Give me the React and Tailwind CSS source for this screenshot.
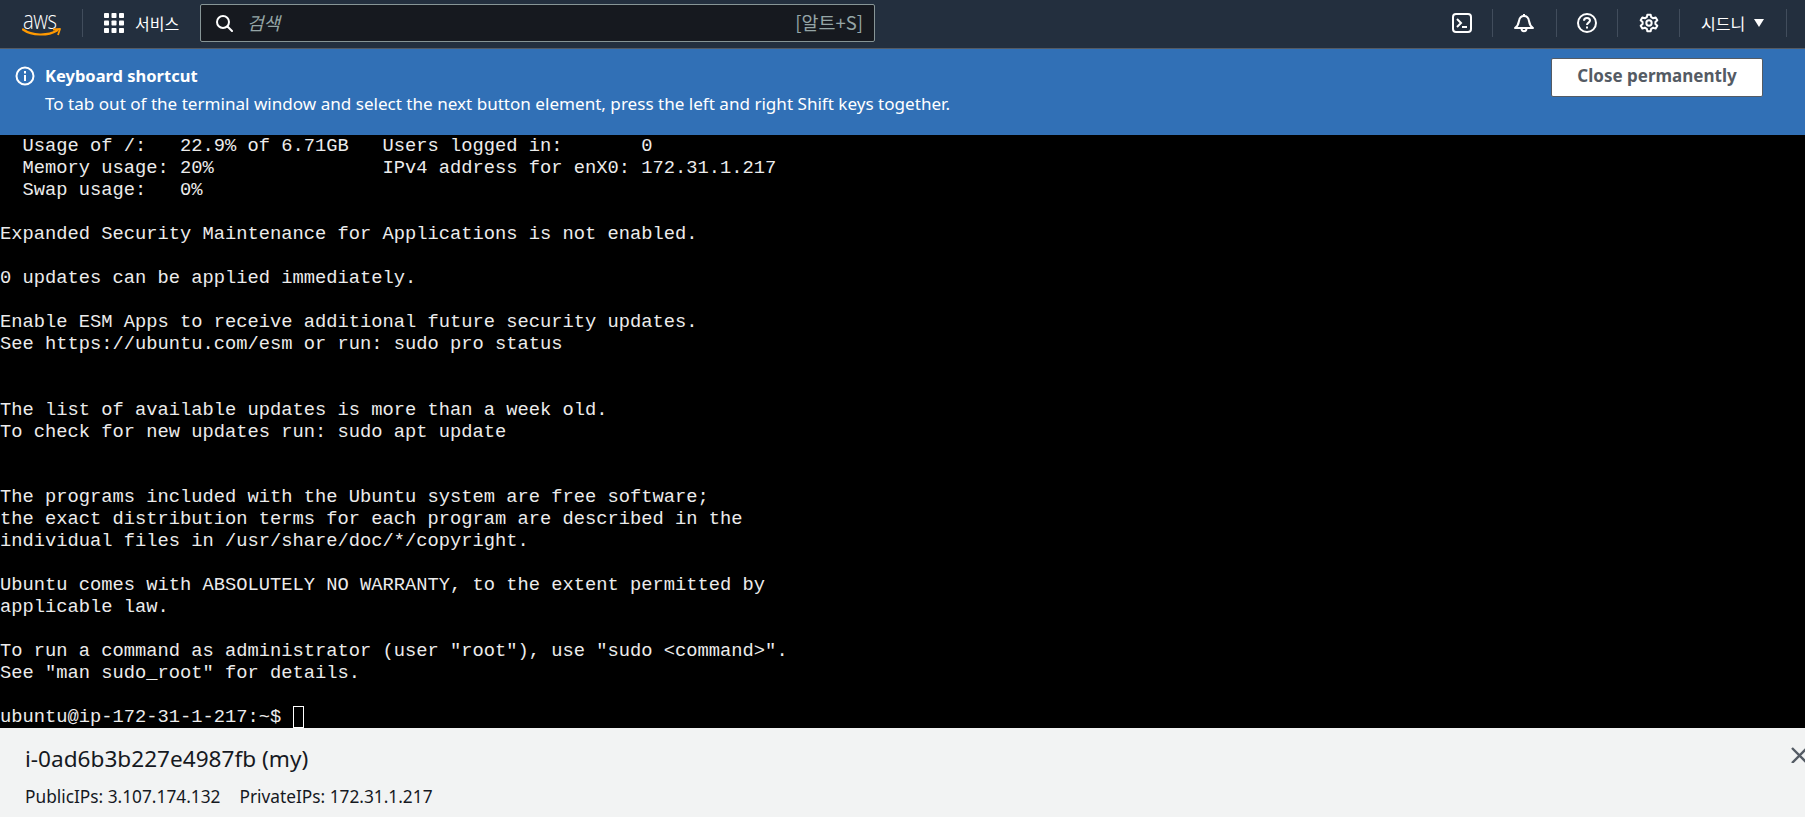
const LINES = [
  "  Usage of /:   22.9% of 6.71GB   Users logged in:       0",
  "  Memory usage: 20%               IPv4 address for enX0: 172.31.1.217",
  "  Swap usage:   0%",
  "",
  "Expanded Security Maintenance for Applications is not enabled.",
  "",
  "0 updates can be applied immediately.",
  "",
  "Enable ESM Apps to receive additional future security updates.",
  "See https://ubuntu.com/esm or run: sudo pro status",
  "",
  "",
  "The list of available updates is more than a week old.",
  "To check for new updates run: sudo apt update",
  "",
  "",
  "The programs included with the Ubuntu system are free software;",
  "the exact distribution terms for each program are described in the",
  "individual files in /usr/share/doc/*/copyright.",
  "",
  "Ubuntu comes with ABSOLUTELY NO WARRANTY, to the extent permitted by",
  "applicable law.",
  "",
  'To run a command as administrator (user "root"), use "sudo <command>".',
  'See "man sudo_root" for details.',
  "",
];

const Sep = ({ className = "" }) => <div className={`w-px h-[28px] bg-[#414d5c] shrink-0 ${className}`} />;

function Header() {
  return (
    <header className="h-[49px] shrink-0 bg-[#232f3e] border-b border-[#545b64] pb-[2px] flex items-center text-white font-['Noto_Sans','Noto_Sans_CJK_KR',sans-serif]">
      <div className="w-[42px] ml-[22px] shrink-0 relative h-[30px]">
        <span className="absolute left-[1px] top-[-4px] text-[26px] leading-[30px] font-light font-['Open_Sans',sans-serif] origin-left scale-x-[0.78] tracking-[-0.5px]">aws</span>
        <svg width="40" height="10" viewBox="0 0 40 10" className="absolute left-0 top-[20px]">
          <path d="M1 1.5 C10 8 26 8 35 2.5" fill="none" stroke="#ff9900" strokeWidth="2.2" strokeLinecap="round" />
          <path d="M31 1.5 L38 1 L36 7" fill="none" stroke="#ff9900" strokeWidth="1.8" strokeLinejoin="round" />
        </svg>
      </div>
      <Sep className="ml-[18px]" />
      <svg width="20" height="20" viewBox="0 0 20 20" className="ml-[21px] shrink-0" fill="#fff">
        {[0, 7.5, 15].map((y) => [0, 7.5, 15].map((x) => <rect key={`${x}-${y}`} x={x} y={y} width="5" height="5" rx="0.8" />))}
      </svg>
      <span className="ml-[11px] text-[16px] leading-[20px] w-[44px] shrink-0 font-['Noto_Sans_CJK_KR',sans-serif] whitespace-nowrap">서비스</span>
      <div className="ml-[21px] w-[675px] h-[38px] rounded-[2px] bg-[#16191f] border border-[#879596] flex items-center pl-[14px] pr-[11px] shrink-0">
        <svg width="18" height="18" viewBox="0 0 18 18" fill="none" stroke="#fff" strokeWidth="2" className="shrink-0">
          <circle cx="8" cy="8" r="6" />
          <path d="M12.5 12.5 L17 17" strokeLinecap="round" />
        </svg>
        <span className="ml-[14px] -mt-[2px] text-[18px] italic text-[#95a5a6] font-['Noto_Sans_CJK_KR',sans-serif]">검색</span>
        <span className="ml-auto text-[18.5px] text-[#95a5a6] font-['Noto_Sans_CJK_KR',sans-serif]">[알트+S]</span>
      </div>
      <div className="ml-auto flex items-center mr-[18px]">
        <svg width="20" height="20" viewBox="0 0 20 20" fill="none" stroke="#fff" strokeWidth="2" className="shrink-0">
          <rect x="1" y="1" width="18" height="18" rx="3" />
          <path d="M5 6 L9 10 L5 14" />
          <path d="M10 14 H15" />
        </svg>
        <Sep className="ml-[20px]" />
        <svg width="20" height="20" viewBox="0 0 20 20" fill="none" stroke="#fff" strokeWidth="2" strokeLinejoin="round" className="ml-[21px] shrink-0">
          <path d="M1 15 C4 13 4.5 11 5 8 C5.5 5 7.5 3 10 3 C12.5 3 14.5 5 15 8 C15.5 11 16 13 19 15 Z" />
          <path d="M10 1 V3" />
          <path d="M7.5 15.5 C7.5 19 12.5 19 12.5 15.5" />
        </svg>
        <Sep className="ml-[22px]" />
        <svg width="20" height="20" viewBox="0 0 20 20" fill="none" stroke="#fff" strokeWidth="2" className="ml-[20px] shrink-0">
          <circle cx="10" cy="10" r="9" />
          <path d="M7 7.7 C7 5.8 8.4 5 10 5 C11.7 5 13 6 13 7.5 C13 9.6 10 9.6 10 12" />
          <path d="M10 13.5 V15.5" />
        </svg>
        <Sep className="ml-[20px]" />
        <svg width="20" height="20" viewBox="0 0 24 24" fill="none" stroke="#fff" strokeWidth="2.4" strokeLinejoin="round" className="ml-[21px] shrink-0">
          <circle cx="12" cy="12" r="3.2" />
          <path d="M10 2 H14 L14.6 5 L17 6.3 L20 5.3 L22 8.7 L19.7 10.8 V13.2 L22 15.3 L20 18.7 L17 17.7 L14.6 19 L14 22 H10 L9.4 19 L7 17.7 L4 18.7 L2 15.3 L4.3 13.2 V10.8 L2 8.7 L4 5.3 L7 6.3 L9.4 5 Z" />
        </svg>
        <Sep className="ml-[20px]" />
        <span className="ml-[21px] w-[44px] whitespace-nowrap text-[16px] leading-[20px] font-['Noto_Sans_CJK_KR',sans-serif]">시드니</span>
        <svg width="10" height="8" viewBox="0 0 10 8" fill="#fff" className="ml-[9px] shrink-0">
          <path d="M0 0 H10 L5 8 Z" />
        </svg>
        <Sep className="ml-[22px]" />
      </div>
    </header>
  );
}

function Banner() {
  return (
    <div className="h-[86px] shrink-0 bg-[#3170b6] flex text-white font-['Noto_Sans',sans-serif] pl-[15px] pr-[42px]">
      <svg width="20" height="20" viewBox="0 0 20 20" fill="none" stroke="#fff" strokeWidth="2" className="mt-[17px] shrink-0">
        <circle cx="10" cy="10" r="8.5" />
        <path d="M10 9 V15 M10 5 V7.5" />
      </svg>
      <div className="ml-[10px] mt-[15px]">
        <div className="text-[16.5px] leading-[24px] font-bold">Keyboard shortcut</div>
        <div className="text-[17.08px] leading-[24px] mt-[4px]">To tab out of the terminal window and select the next button element, press the left and right Shift keys together.</div>
      </div>
      <button className="ml-auto mt-[9px] w-[212px] h-[39px] pb-[3px] bg-white rounded-[2px] border border-[#545b64] text-[#545b64] text-[17px] font-bold">Close permanently</button>
    </div>
  );
}

function Terminal() {
  return (
    <div className="flex-1 min-h-0 bg-black overflow-hidden flex flex-col justify-end text-[#ececec] font-['Liberation_Mono',monospace] text-[18.75px] leading-[22px] whitespace-pre">
      {LINES.map((line, i) => (
        <div key={i} className="h-[21.96px] shrink-0">{line}</div>
      ))}
      <div className="h-[22px] shrink-0 flex items-stretch">
        <span>ubuntu@ip-172-31-1-217:~$ </span>
        <span className="w-[11px] h-[22px] border border-white" />
      </div>
    </div>
  );
}

function Footer() {
  return (
    <div className="h-[89px] shrink-0 bg-[#f2f3f3] relative text-[#16191f] font-['Noto_Sans',sans-serif] pl-[25px] pt-[16px]">
      <div className="text-[22.6px] leading-[30px]">i-0ad6b3b227e4987fb (my)</div>
      <div className="mt-[11px] text-[17.3px] leading-[24px] flex gap-[19px]">
        <span>PublicIPs: 3.107.174.132</span>
        <span>PrivateIPs: 172.31.1.217</span>
      </div>
      <svg width="14" height="16" viewBox="0 0 14 16" className="absolute right-0 top-[19px]" stroke="#545b64" strokeWidth="2.4" fill="none">
        <path d="M1 1 L16 16 M1 16 L16 1" />
      </svg>
    </div>
  );
}

export default function App() {
  return (
    <div className="h-[817px] w-[1805px] flex flex-col overflow-hidden">
      <Header />
      <Banner />
      <Terminal />
      <Footer />
    </div>
  );
}
